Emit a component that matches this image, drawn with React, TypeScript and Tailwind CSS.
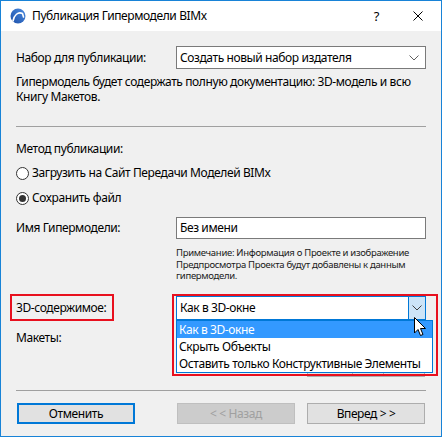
import React from 'react';

const font = { fontFamily: '"Noto Sans", "Open Sans", sans-serif' };

function Chevron({ color = '#606060' }: { color?: string }) {
  return (
    <svg width="10" height="6" viewBox="0 0 10 6">
      <path d="M0.5 0.5 L5 5 L9.5 0.5" fill="none" stroke={color} strokeWidth="1" />
    </svg>
  );
}

function Radio({ checked }: { checked?: boolean }) {
  return (
    <span className="w-[13px] h-[13px] rounded-full border border-[#333] bg-white flex items-center justify-center">
      {checked && <span className="w-[7px] h-[7px] rounded-full bg-[#333]" />}
    </span>
  );
}

function AppIcon() {
  return (
    <svg width="16" height="16" viewBox="0 0 16 16">
      <defs>
        <linearGradient id="g" x1="0" y1="1" x2="1" y2="0">
          <stop offset="0" stopColor="#1d4fa8" />
          <stop offset="1" stopColor="#4a8be0" />
        </linearGradient>
      </defs>
      <circle cx="8" cy="8" r="7.5" fill="url(#g)" />
      <path d="M3 13 C4 7 8 3.5 12.5 5.5 L13.5 9" fill="none" stroke="#fff" strokeWidth="1.6" strokeLinecap="round" />
    </svg>
  );
}

function Cursor() {
  return (
    <svg width="13" height="20" viewBox="0 0 13 20">
      <path
        d="M0.5 0.5 L0.5 16 L4 12.5 L6.5 18.5 L9 17.5 L6.5 11.5 L11.5 11.5 Z"
        fill="#fff"
        stroke="#000"
        strokeWidth="1"
        strokeLinejoin="miter"
      />
    </svg>
  );
}

export default function App() {
  return (
    <div
      className="relative w-[442px] h-[437px] border border-[#1883d7] bg-[#f0f0f0] flex flex-col text-[12px] tracking-[-0.4px] text-black overflow-hidden whitespace-nowrap"
      style={font}
    >
      {/* title bar */}
      <div className="h-[30px] bg-white flex items-center shrink-0">
        <span className="ml-[9px] mr-[6px] flex">
          <AppIcon />
        </span>
        <span className="text-[12px] leading-none">Публикация Гипермодели BIMx</span>
        <span className="ml-auto mr-[34px] text-[13px] leading-none">?</span>
        <svg width="10" height="10" viewBox="0 0 10 10" className="mr-[18px]">
          <path d="M0.5 0.5 L9.5 9.5 M9.5 0.5 L0.5 9.5" stroke="#000" strokeWidth="1" />
        </svg>
      </div>

      <div className="flex flex-col pl-[15px] pr-[15px]">
        {/* publish set */}
        <div className="mt-[15px] h-[23px] flex items-center">
          <span className="w-[160px]">Набор для публикации:</span>
          <div className="w-[250px] h-[23px] border border-[#7a7a7a] bg-white flex items-center pl-[3px] pr-[6px]">
            <span className="flex-1">Создать новый набор издателя</span>
            <Chevron />
          </div>
        </div>

        <p className="mt-[5px] leading-[15px]">
          Гипермодель будет содержать полную документацию: 3D-модель и всю
          <br />
          Книгу Макетов.
        </p>

        <div className="mt-[22px] h-px bg-[#a0a0a0]" />

        <div className="mt-[14px] leading-[15px]">Метод публикации:</div>

        <div className="mt-[9px] h-[16px] flex items-center gap-[3px]">
          <Radio />
          <span>Загрузить на Сайт Передачи Моделей BIMx</span>
        </div>
        <div className="mt-[9px] h-[16px] flex items-center gap-[3px]">
          <Radio checked />
          <span>Сохранить файл</span>
        </div>

        <div className="mt-[11px] h-[22px] flex items-center">
          <span className="w-[160px]">Имя Гипермодели:</span>
          <div className="w-[250px] h-[22px] border border-[#7a7a7a] bg-white flex items-center pl-[3px]">
            Без имени
          </div>
        </div>

        <p className="mt-[8px] ml-[160px] text-[9.5px] tracking-[-0.3px] leading-[11.5px] text-[#1a1a1a]">
          Примечание: Информация о Проекте и изображение
          <br />
          Предпросмотра Проекта будут добавлены к данным
          <br />
          гипермодели.
        </p>

        <div className="mt-[14.5px] h-[24px] flex items-center">
          <span className="w-[160px]">3D-содержимое:</span>
          <div className="w-[250px] h-[24px] border border-[#0078d7] bg-white flex items-stretch">
            <span className="flex-1 flex items-center pl-[3px]">Как в 3D-окне</span>
            <span className="w-[17px] bg-[#cce4f7] border-l border-[#0078d7] flex items-center justify-center">
              <Chevron color="#404040" />
            </span>
          </div>
        </div>

        <div className="mt-[10px] h-[47px] flex">
          <span className="w-[291px] leading-[15px]">Макеты:</span>
          <div className="self-end w-[118px] h-[22px] border border-[#adadad] bg-[#e1e1e1] flex">
            <span className="w-[45px] border-r border-[#adadad]" />
            <span className="w-[31px] border-r border-[#adadad]" />
          </div>
        </div>

        <div className="mt-[13px] h-px bg-[#a0a0a0]" />

        <div className="mt-[12px] h-[21px] flex">
          <button className="ml-[1px] w-[118px] h-[21px] border-2 border-[#0078d7] bg-[#e1e1e1] flex items-center justify-center">
            Отменить
          </button>
          <button className="ml-[42px] w-[118px] h-[21px] border border-[#bfbfbf] bg-[#cccccc] text-[#a0a0a0] flex items-center justify-center">
            {'< < Назад'}
          </button>
          <button className="ml-[12px] w-[118px] h-[21px] border border-[#adadad] bg-[#e1e1e1] flex items-center justify-center">
            {'Вперед > >'}
          </button>
        </div>
      </div>

      {/* open dropdown list */}
      <div className="absolute left-[175px] top-[319px] w-[257px] h-[53px] border border-[#0078d7] bg-white flex flex-col">
        <div className="h-[17px] bg-[#3399ff] text-white flex items-center pl-[2px]">Как в 3D-окне</div>
        <div className="h-[17px] flex items-center pl-[2px]">Скрыть Объекты</div>
        <div className="h-[17px] flex items-center pl-[2px]">Оставить только Конструктивные Элементы</div>
      </div>

      {/* annotation boxes */}
      <div className="absolute left-[9px] top-[293px] w-[104px] h-[27px] border-2 border-[#e8101e]" />
      <div className="absolute left-[171px] top-[293px] w-[266px] h-[82px] border-2 border-[#e8101e]" />

      {/* mouse pointer */}
      <div className="absolute left-[413px] top-[316px]">
        <Cursor />
      </div>
    </div>
  );
}
